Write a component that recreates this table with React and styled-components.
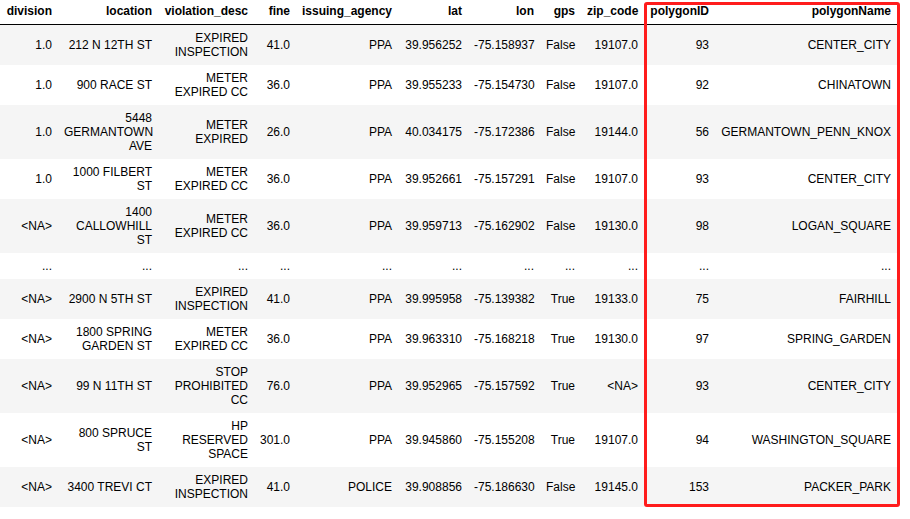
import React from 'react'
import styled, { createGlobalStyle } from 'styled-components'

const GlobalStyle = createGlobalStyle`
  body {
    margin: 0;
    background: #fff;
    font-family: "Liberation Sans", Arial, sans-serif;
  }
`

const Frame = styled.div`
  position: relative;
  width: 910px;
  height: 519px;
  overflow: hidden;
`

const Table = styled.table`
  margin-top: -2px;
  border-collapse: collapse;
  border-spacing: 0;
  table-layout: fixed;
  width: 897px;
  font-size: 12px;
  color: #000;
`

const Head = styled.th`
  padding: 6px;
  text-align: right;
  vertical-align: bottom;
  font-weight: bold;
  line-height: normal;
  border-bottom: 1px solid #000;
  white-space: nowrap;
`

const Row = styled.tr`
  background: ${p => (p.$odd ? '#f5f5f5' : '#fff')};
`

const Cell = styled.td`
  padding: 6px;
  text-align: right;
  vertical-align: middle;
  line-height: normal;
`

// red annotation box drawn over the last two columns
const Highlight = styled.div`
  position: absolute;
  left: 644px;
  top: 2px;
  width: 250px;
  height: 499px;
  border: 3px solid #ff1c1c;
  border-radius: 3px;
  pointer-events: none;
`

const columns = [
  { name: 'division', width: 58 },
  { name: 'location', width: 100 },
  { name: 'violation_desc', width: 96 },
  { name: 'fine', width: 42 },
  { name: 'issuing_agency', width: 102 },
  { name: 'lat', width: 70 },
  { name: 'lon', width: 72 },
  { name: 'gps', width: 41 },
  { name: 'zip_code', width: 63 },
  { name: 'polygonID', width: 71 },
  { name: 'polygonName', width: 182 },
]

const NA = '<NA>'
const dots = Array(11).fill('...')

const rows = [
  ['1.0', '212 N 12TH ST', 'EXPIRED INSPECTION', '41.0', 'PPA', '39.956252', '-75.158937', 'False', '19107.0', '93', 'CENTER_CITY'],
  ['1.0', '900 RACE ST', 'METER EXPIRED CC', '36.0', 'PPA', '39.955233', '-75.154730', 'False', '19107.0', '92', 'CHINATOWN'],
  ['1.0', '5448 GERMANTOWN AVE', 'METER EXPIRED', '26.0', 'PPA', '40.034175', '-75.172386', 'False', '19144.0', '56', 'GERMANTOWN_PENN_KNOX'],
  ['1.0', '1000 FILBERT ST', 'METER EXPIRED CC', '36.0', 'PPA', '39.952661', '-75.157291', 'False', '19107.0', '93', 'CENTER_CITY'],
  [NA, '1400 CALLOWHILL ST', 'METER EXPIRED CC', '36.0', 'PPA', '39.959713', '-75.162902', 'False', '19130.0', '98', 'LOGAN_SQUARE'],
  dots,
  [NA, '2900 N 5TH ST', 'EXPIRED INSPECTION', '41.0', 'PPA', '39.995958', '-75.139382', 'True', '19133.0', '75', 'FAIRHILL'],
  [NA, '1800 SPRING GARDEN ST', 'METER EXPIRED CC', '36.0', 'PPA', '39.963310', '-75.168218', 'True', '19130.0', '97', 'SPRING_GARDEN'],
  [NA, '99 N 11TH ST', 'STOP PROHIBITED CC', '76.0', 'PPA', '39.952965', '-75.157592', 'True', NA, '93', 'CENTER_CITY'],
  [NA, '800 SPRUCE ST', 'HP RESERVED SPACE', '301.0', 'PPA', '39.945860', '-75.155208', 'True', '19107.0', '94', 'WASHINGTON_SQUARE'],
  [NA, '3400 TREVI CT', 'EXPIRED INSPECTION', '41.0', 'POLICE', '39.908856', '-75.186630', 'False', '19145.0', '153', 'PACKER_PARK'],
]

export default function App() {
  return (
    <Frame>
      <GlobalStyle />
      <Table>
        <colgroup>
          {columns.map(c => (
            <col key={c.name} style={{ width: c.width }} />
          ))}
        </colgroup>
        <thead>
          <tr>
            {columns.map(c => (
              <Head key={c.name}>{c.name}</Head>
            ))}
          </tr>
        </thead>
        <tbody>
          {rows.map((r, i) => (
            <Row key={i} $odd={i % 2 === 0}>
              {r.map((v, j) => (
                <Cell key={j}>{v}</Cell>
              ))}
            </Row>
          ))}
        </tbody>
      </Table>
      <Highlight />
    </Frame>
  )
}
